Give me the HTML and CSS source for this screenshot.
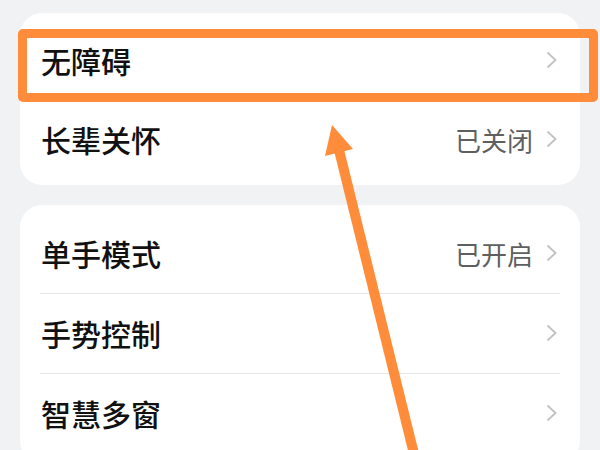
FILE: index.html
```html
<!DOCTYPE html>
<html lang="zh-CN">
<head>
    <meta charset="UTF-8">
    <meta name="viewport" content="width=device-width, initial-scale=1.0">
    <title>设置</title>
    <link rel="stylesheet" href="styles.css">
</head>
<body>
    <div class="group first">
        <div class="item">
            <span class="label">无障碍</span>
            <span class="chevron"><svg width="12" height="18" viewBox="0 0 12 18"><path d="M1.5 1.5 L9.5 9 L1.5 16.5" fill="none" stroke="#c3c3c3" stroke-width="1.9"/></svg></span>
        </div>
        <div class="item">
            <span class="label">长辈关怀</span>
            <span class="value">已关闭</span>
            <span class="chevron"><svg width="12" height="18" viewBox="0 0 12 18"><path d="M1.5 1.5 L9.5 9 L1.5 16.5" fill="none" stroke="#c3c3c3" stroke-width="1.9"/></svg></span>
        </div>
    </div>

    <div class="group second">
        <div class="item">
            <span class="label">单手模式</span>
            <span class="value">已开启</span>
            <span class="chevron"><svg width="12" height="18" viewBox="0 0 12 18"><path d="M1.5 1.5 L9.5 9 L1.5 16.5" fill="none" stroke="#c3c3c3" stroke-width="1.9"/></svg></span>
        </div>
        <div class="divider"></div>
        <div class="item">
            <span class="label">手势控制</span>
            <span class="chevron"><svg width="12" height="18" viewBox="0 0 12 18"><path d="M1.5 1.5 L9.5 9 L1.5 16.5" fill="none" stroke="#c3c3c3" stroke-width="1.9"/></svg></span>
        </div>
        <div class="divider"></div>
        <div class="item">
            <span class="label">智慧多窗</span>
            <span class="chevron"><svg width="12" height="18" viewBox="0 0 12 18"><path d="M1.5 1.5 L9.5 9 L1.5 16.5" fill="none" stroke="#c3c3c3" stroke-width="1.9"/></svg></span>
        </div>
    </div>

    <!-- annotation overlay -->
    <div class="highlight"></div>
    <svg class="arrow" width="600" height="450" viewBox="0 0 600 450">
        <line x1="339" y1="150" x2="416" y2="462" stroke="#ff8c3a" stroke-width="10"/>
        <polygon points="332,125 353,149 325,156" fill="#ff8c3a"/>
    </svg>
</body>
</html>
```

FILE: styles.css
```css
html, body {
    margin: 0;
    height: 100%;
    overflow: hidden;
}

body {
    background: #f1f2f4;
    font-family: "Noto Sans CJK SC", "Noto Sans", sans-serif;
    position: relative;
    padding-top: 13px;
    box-sizing: border-box;
}

.group {
    background: #fff;
    margin: 0 20px;
    border-radius: 22px;
}

.group.first {
    padding: 8px 0 6px;
}

.group.second {
    margin-top: 20px;
    padding: 9px 0 10px;
}

.item {
    display: flex;
    align-items: center;
    height: 79px;
    box-sizing: border-box;
    padding: 0 22px 1px 21px;
}

.label {
    flex: 1;
    font-size: 30px;
    font-weight: 500;
    color: #111;
}

.value {
    font-size: 26px;
    color: #5f5f5f;
    margin-right: 13px;
}

.chevron {
    display: flex;
    align-items: center;
}

.divider {
    height: 1px;
    background: #e6e6e6;
    margin: 0 20px;
}

.highlight {
    position: absolute;
    left: 18px;
    top: 29px;
    width: 562px;
    height: 55px;
    border: 9px solid #ff8c3a;
    border-radius: 5px;
}

.arrow {
    position: absolute;
    left: 0;
    top: 0;
}
```
